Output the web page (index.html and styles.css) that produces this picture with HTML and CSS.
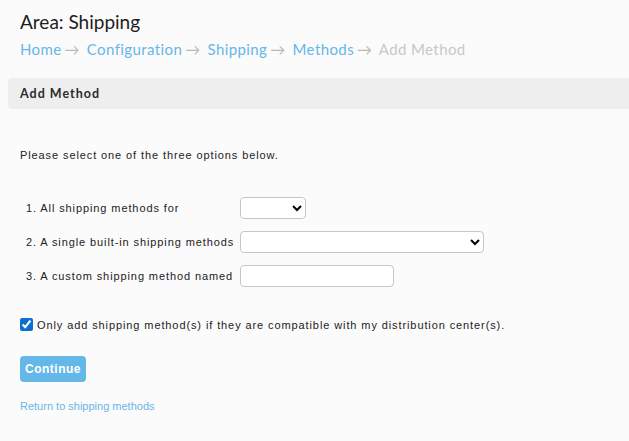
FILE: index.html
```html
<!DOCTYPE html>
<html lang="en">
<head>
    <meta charset="UTF-8">
    <title>Add Method</title>
    <link rel="stylesheet" href="styles.css">
</head>
<body>
    <div class="page-head">
        <h1>Area: Shipping</h1>
        <div class="crumbs">
            <a href="#">Home</a><span class="arr">&rarr;</span>
            <a href="#">Configuration</a><span class="arr">&rarr;</span>
            <a href="#">Shipping</a><span class="arr">&rarr;</span>
            <a href="#">Methods</a><span class="arr">&rarr;</span>
            <span class="current">Add Method</span>
        </div>
    </div>

    <div class="panel">
        <div class="panel-title">Add Method</div>
    </div>

    <div class="content">
        <p class="intro">Please select one of the three options below.</p>

        <table class="opts">
            <tr>
                <td>1. All shipping methods for</td>
                <td><select class="sel-small"><option></option></select></td>
            </tr>
            <tr>
                <td>2. A single built-in shipping methods</td>
                <td><select class="sel-wide"><option></option></select></td>
            </tr>
            <tr>
                <td>3. A custom shipping method named</td>
                <td><input type="text" class="txt"></td>
            </tr>
        </table>

        <label class="check">
            <input type="checkbox" checked>
            <span>Only add shipping method(s) if they are compatible with my distribution center(s).</span>
        </label>

        <button class="btn">Continue</button>

        <a href="#" class="back">Return to shipping methods</a>
    </div>
</body>
</html>
```

FILE: styles.css
```css
* {
    box-sizing: border-box;
}

body {
    margin: 0;
    background: #fbfbfb;
    font-family: 'Liberation Sans', Arial, sans-serif;
    font-size: 11px;
    color: #222;
    overflow: hidden;
}

a {
    text-decoration: none;
}

/* 页头 */
.page-head {
    padding: 10px 20px 0;
    font-family: 'Lato', sans-serif;
}

.page-head h1 {
    margin: 0;
    font-size: 19px;
    font-weight: 400;
    color: #1d1d1d;
    line-height: 24px;
}

.crumbs {
    margin-top: 5px;
    font-size: 15px;
    line-height: 20px;
    letter-spacing: 0.4px;
}

.crumbs a {
    color: #67b6ea;
}

.crumbs .arr {
    color: #b8b8b8;
    margin: 0 3px;
    letter-spacing: 0;
}

.crumbs .current {
    color: #c8c8c8;
}

/* 面板标题 */
.panel {
    margin: 19px 0 0 8px;
    width: 640px;
    height: 31px;
    background: #eeeeee;
    border-radius: 4px;
    display: flex;
    align-items: center;
    padding-left: 12px;
}

.panel-title {
    font-family: 'Lato', sans-serif;
    font-weight: 700;
    font-size: 12.5px;
    letter-spacing: 1px;
    color: #2b2b2b;
    margin-top: -1px;
}

/* 内容 */
.content {
    padding: 0 20px;
    letter-spacing: 0.9px;
}

.intro {
    margin: 40px 0 30px;
}

.opts {
    border-collapse: collapse;
    margin-left: 3px;
}

.opts td {
    padding: 6px 3px;
    height: 34px;
    white-space: nowrap;
}

select, .txt {
    height: 22px;
    border: 1px solid #c6c6c6;
    border-radius: 4px;
    background: #fff;
    font-size: 11px;
}

.sel-small {
    width: 66px;
}

.sel-wide {
    width: 244px;
}

.txt {
    width: 154px;
}

.check {
    display: flex;
    align-items: center;
    gap: 4px;
    margin-top: 25px;
}

.check input {
    margin: 0;
    width: 13px;
    height: 13px;
    accent-color: #0b6fd0;
}

.btn {
    display: block;
    margin-top: 25px;
    height: 26px;
    padding: 0 5px;
    border: none;
    border-radius: 4px;
    background: #64b8e8;
    color: #fff;
    font-family: 'Liberation Sans', Arial, sans-serif;
    font-weight: 700;
    font-size: 12px;
    letter-spacing: 0.5px;
}

.back {
    display: inline-block;
    margin-top: 18px;
    color: #69b5e6;
    letter-spacing: 0;
}
```
